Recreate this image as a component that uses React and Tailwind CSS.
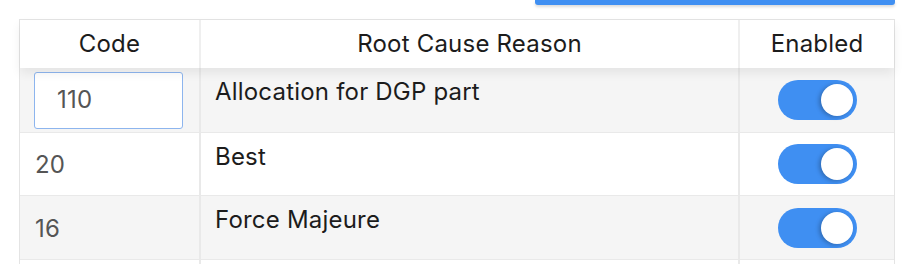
import React from "react";

const rows = [
  { code: "110", reason: "Allocation for DGP part", editing: true, h: "h-[65px]", bg: "bg-[#f5f5f5]" },
  { code: "20", reason: "Best", h: "h-[63px]", bg: "bg-white" },
  { code: "16", reason: "Force Majeure", h: "h-[64px]", bg: "bg-[#f5f5f5]" },
  { code: "", reason: "", h: "h-[40px]", bg: "bg-white" },
];

function Toggle() {
  return (
    <div className="w-[79px] h-[40px] rounded-full bg-[#3f8ff2] flex items-center justify-end pr-[4px]">
      <div className="w-[32px] h-[32px] rounded-full bg-white shadow-[-2px_1px_4px_rgba(0,0,0,0.25)]" />
    </div>
  );
}

export default function App() {
  return (
    <div className="w-[906px] h-[264px] overflow-hidden bg-white text-[#1c1c1c] font-['Inter',sans-serif] text-[24px] tracking-[0.2px]">
      {/* Top action button, scrolled mostly out of view */}
      <div className="flex justify-end pr-[11px]">
        <div className="w-[360px] h-[5px] bg-[#3f8ff2] rounded-b-[3px] shadow-[0_2px_3px_rgba(0,0,0,0.15)]" />
      </div>

      {/* Table */}
      <div className="ml-[19px] mt-[14px] w-[876px] border border-[#e4e4e4]">
        <div className="relative z-10 flex h-[48px] bg-white shadow-[0_5px_10px_rgba(0,0,0,0.07)]">
          <div className="w-[181px] border-r-2 border-[#efefef] flex items-center justify-center">Code</div>
          <div className="w-[539px] border-r-2 border-[#efefef] flex items-center justify-center">Root Cause Reason</div>
          <div className="flex-1 flex items-center justify-center">Enabled</div>
        </div>

        {rows.map((r, i) => (
          <div key={i} className={`flex ${r.h} ${r.bg} border-b border-[#e9e9e9]`}>
            <div className="w-[181px] border-r-2 border-[#e9e9e9] flex items-center">
              {r.editing ? (
                <div className="ml-[14px] w-[149px] h-[57px] border border-[#8db5ee] rounded-[3px] bg-white flex items-center pl-[22px] text-[#555]">
                  {r.code}
                </div>
              ) : (
                <span className="pl-[15px] pt-[2px] text-[#555]">{r.code}</span>
              )}
            </div>
            <div className="w-[539px] border-r-2 border-[#e9e9e9] pl-[14px] pt-[6px]">{r.reason}</div>
            <div className="flex-1 flex items-center justify-center">
              {r.code && <Toggle />}
            </div>
          </div>
        ))}
      </div>
    </div>
  );
}
